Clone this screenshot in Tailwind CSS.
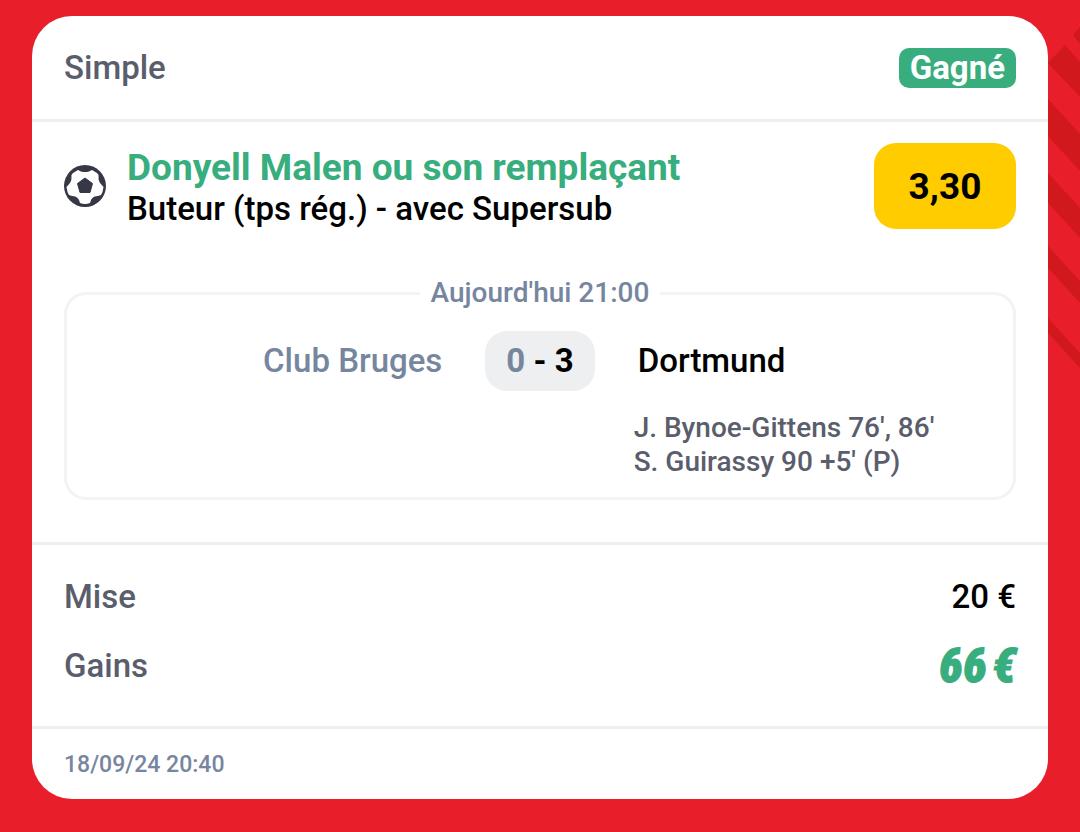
<!DOCTYPE html>
<html lang="fr">
<head>
    <meta charset="UTF-8">
    <meta name="viewport" content="width=device-width, initial-scale=1.0">
    <title>Pari simple</title>
    <script src="https://cdn.jsdelivr.net/npm/@tailwindcss/browser@4"></script>
</head>
<body class="relative min-h-screen overflow-x-hidden bg-[#e81f2b] px-8 py-4 font-['Roboto',sans-serif] font-medium text-black">
    <!-- Diagonal stripes behind the card -->
    <svg class="absolute top-0 right-0 h-[400px] w-8" viewBox="0 0 32 400" fill="#d0181d" aria-hidden="true">
        <path d="M32 27L25 35L32 44Z"/>
        <path d="M0 63L17 45L32 62V97Z"/>
        <path d="M0 99L32 134V171L0 136Z"/>
        <path d="M0 173L32 208V238L0 203Z"/>
        <path d="M0 246L32 281V303L0 268Z"/>
        <path d="M0 318L32 353V368L0 333Z"/>
    </svg>

    <main class="relative rounded-[40px] bg-white">
        <header class="flex items-center justify-between border-b-3 border-[#eeeff1] px-8 pt-8 pb-[31px]">
            <h1 class="text-[33px] leading-10 text-[#5a5d6b]">Simple</h1>
            <span class="rounded-[10px] bg-[#38ad7d] px-[11px] text-[33px] leading-10 font-bold text-white">Gagné</span>
        </header>

        <section class="px-8 pt-[21px] pb-[42px]">
            <div class="flex items-center">
                <svg class="h-[42px] w-[42px] shrink-0" viewBox="0 0 42 42" aria-hidden="true">
                    <circle cx="21" cy="21" r="21" fill="#373845"/>
                    <path fill="#fff" d="M14 5L17 6.500Q21 7.500 25 6.500L28 5L33 8L34.500 10Q34 15 36 18L39.500 22Q39 27 37 30L34 31Q29 31 27 35L26 38Q21 40 16 38L15 35Q13 31 8 31L5 30Q3 27 2.500 22L6 18Q8 15 7.500 10L9 8Z"/>
                    <path fill="#373845" stroke="#373845" stroke-width="1" stroke-linejoin="round" d="M21 13L28.500 18.500L26 27.500H16L13.500 18.500Z"/>
                </svg>
                <div class="ml-[21px] flex-1 pt-1">
                    <h2 class="text-[37px] leading-[42px] font-bold text-[#38ad7d]">Donyell Malen ou son remplaçant</h2>
                    <p class="text-[33px] leading-10">Buteur (tps rég.) - avec Supersub</p>
                </div>
                <button type="button" class="h-[86px] w-[142px] rounded-[22px] bg-[#ffcc00] pt-px text-[37px] font-bold">3,30</button>
            </div>

            <fieldset class="mt-11 rounded-[22px] border-3 border-[#f2f3f4] pb-[18px]">
                <legend class="mx-auto px-[11px] text-[28px] leading-10 text-[#76869f]">Aujourd'hui 21:00</legend>
                <div class="mt-[18px] grid grid-cols-[1fr_auto_1fr] items-center gap-x-[43px] text-[33px] leading-10">
                    <span class="text-right text-[#76869f]">Club Bruges</span>
                    <span class="rounded-[22px] bg-[#eeeff1] px-[21px] py-[10px] font-bold"><span class="text-[#76869f]">0</span> - 3</span>
                    <span>Dortmund</span>
                    <p class="col-start-3 mt-5 -ml-1 text-[28px] leading-[34px] text-[#5a5d6b]">J. Bynoe-Gittens 76', 86'<br>S. Guirassy 90 +5' (P)</p>
                </div>
            </fieldset>
        </section>

        <dl class="grid grid-cols-2 gap-y-[29px] border-y-3 border-[#eeeff1] px-8 pt-8 pb-10 text-[33px] leading-10">
            <dt class="text-[#5a5d6b]">Mise</dt>
            <dd class="text-right">20 €</dd>
            <dt class="text-[#5a5d6b]">Gains</dt>
            <dd class="text-right font-['Roboto_Condensed','Liberation_Sans_Narrow','Roboto',sans-serif] text-[48px] font-black text-[#38ad7d] italic [-webkit-text-stroke:1px_#38ad7d]">66&#x202f;€</dd>
        </dl>

        <footer class="px-8 pt-4 pb-[14px] text-[23px] leading-10 text-[#76869f]">
            <time datetime="2024-09-18T20:40">18/09/24 20:40</time>
        </footer>
    </main>
</body>
</html>
